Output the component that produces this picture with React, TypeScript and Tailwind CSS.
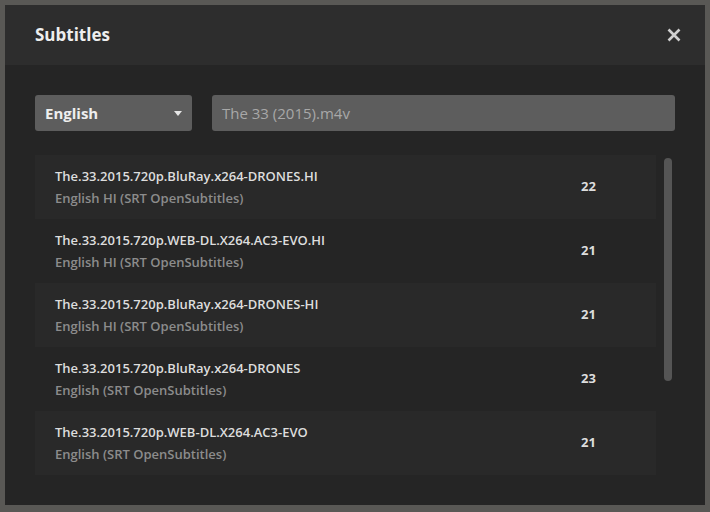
const rows = [
  { name: "The.33.2015.720p.BluRay.x264-DRONES.HI", lang: "English HI (SRT OpenSubtitles)", score: 22 },
  { name: "The.33.2015.720p.WEB-DL.X264.AC3-EVO.HI", lang: "English HI (SRT OpenSubtitles)", score: 21 },
  { name: "The.33.2015.720p.BluRay.x264-DRONES-HI", lang: "English HI (SRT OpenSubtitles)", score: 21 },
  { name: "The.33.2015.720p.BluRay.x264-DRONES", lang: "English (SRT OpenSubtitles)", score: 23 },
  { name: "The.33.2015.720p.WEB-DL.X264.AC3-EVO", lang: "English (SRT OpenSubtitles)", score: 21 },
];

export default function App() {
  return (
    <div
      className="w-[710px] h-[512px] bg-[#595855] p-[5px] overflow-hidden"
      style={{ fontFamily: '"Open Sans", "Noto Sans", sans-serif' }}
    >
      <div className="w-[700px] h-[500px] bg-[#252525] flex flex-col">
        {/* header */}
        <div className="h-[60px] bg-[#2d2d2d] px-[30px] flex items-center justify-between">
          <h1 className="text-[17px] font-bold text-[#eeeeee]">Subtitles</h1>
          <button className="w-[16px] h-[16px] mr-[-7px] flex items-center justify-center">
            <svg width="14" height="14" viewBox="0 0 14 14">
              <path d="M1.5 1.5 L12.5 12.5 M12.5 1.5 L1.5 12.5" stroke="#cfcfcf" strokeWidth="2.6" />
            </svg>
          </button>
        </div>

        <div className="px-[30px] pt-[30px]">
          {/* search controls */}
          <div className="flex gap-[20px] h-[36px]">
            <div className="w-[157px] h-full bg-[#5d5d5d] rounded-[3px] flex items-center justify-between pl-[10px] pr-[10px]">
              <span className="text-[15px] font-bold text-[#eeeeee]">English</span>
              <svg width="8" height="5" viewBox="0 0 8 5">
                <path d="M0 0 H8 L4 5 Z" fill="#e6e6e6" />
              </svg>
            </div>
            <div className="flex-1 h-full bg-[#5d5d5d] rounded-[3px] flex items-center px-[10px]">
              <span className="text-[15px] text-[#a8a8a8]">The 33 (2015).m4v</span>
            </div>
          </div>

          {/* results */}
          <div className="flex mt-[24px]">
            <div className="w-[621px] flex flex-col">
              {rows.map((r, i) => (
                <div
                  key={i}
                  className={`h-[64px] flex items-center pl-[20px] ${i % 2 === 0 ? "bg-[#292929]" : "bg-[#252525]"}`}
                >
                  <div className="flex-1 flex flex-col leading-[22px] text-[13px] font-semibold">
                    <span className="text-[#dddddd]">{r.name}</span>
                    <span className="text-[#8c8c8c]">{r.lang}</span>
                  </div>
                  <div className="w-[75px] text-[13px] font-bold text-[#dddddd]">{r.score}</div>
                </div>
              ))}
            </div>
            <div className="ml-[8px] mt-[3px] w-[8px] h-[223px] rounded-full bg-[#555555]" />
          </div>
        </div>
      </div>
    </div>
  );
}
